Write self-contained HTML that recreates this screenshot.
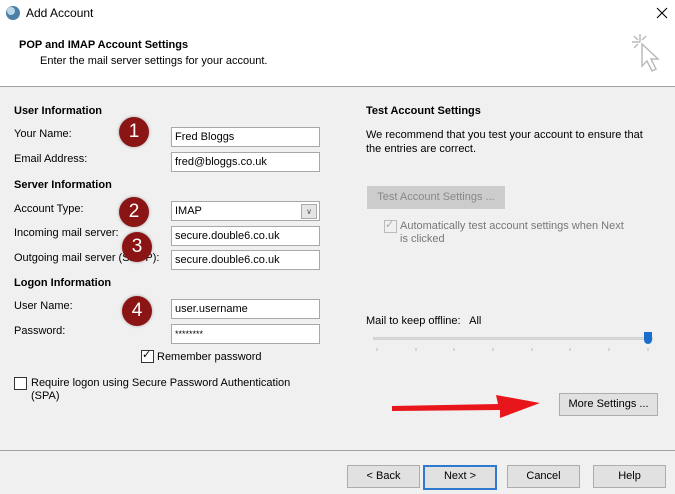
<!DOCTYPE html>
<html><head><style>
body{margin:0;width:675px;height:494px;background:#f0f0f0;font-family:"Liberation Sans",sans-serif;font-size:11px;color:#000;position:relative;overflow:hidden}
.a{position:absolute;white-space:nowrap}
.hdr{position:absolute;left:0;top:0;width:675px;height:86px;background:#fff;border-bottom:1px solid #a0a0a0}
.b{font-weight:bold}
.in{position:absolute;left:171px;width:144px;height:18px;border:1px solid #a8a8a8;background:#fff;line-height:18px;padding-left:3px;box-sizing:content-box;font-size:11px}
.c{position:absolute;width:30px;height:30px;border-radius:50%;background:#8b1414;color:#fff;font-size:19px;text-align:center;line-height:30px;box-shadow:0 0 3px rgba(0,0,0,.3)}
.btn{position:absolute;height:21px;border:1px solid #adadad;background:#e1e1e1;text-align:center;line-height:21px}
.cb{position:absolute;width:11px;height:11px;border:1px solid #333;background:#fff}
</style></head><body>
<div class="hdr"></div>
<svg class="a" style="left:5px;top:5px" width="16" height="16"><circle cx="8" cy="8" r="7" fill="#4a7fa8"/><circle cx="6" cy="6" r="4" fill="#b8d8ea"/></svg>
<div class="a" style="left:26px;top:6px;font-size:12px">Add Account</div>
<svg class="a" style="left:656px;top:7px" width="12" height="12" stroke="#000" stroke-width="1.1"><path d="M1 1L11 11M11 1L1 11"/></svg>
<svg class="a" style="left:628px;top:30px" width="36" height="52" stroke="#bbb" fill="none" stroke-width="1.5"><path d="M12 4v8M4 12h8M6 6l4 4M18 6l-4 4M6 18l4-4"/><path d="M14 14l0 22 5-5 5 10 4-2-5-10 7 0z" fill="#fff"/></svg>
<div class="a b" style="left:19px;top:39px">POP and IMAP Account Settings</div>
<div class="a" style="left:40px;top:55px">Enter the mail server settings for your account.</div>

<div class="a b" style="left:14px;top:105px">User Information</div>
<div class="a" style="left:14px;top:128px">Your Name:</div>
<div class="a" style="left:14px;top:153px">Email Address:</div>
<div class="a b" style="left:14px;top:179px">Server Information</div>
<div class="a" style="left:14px;top:203px">Account Type:</div>
<div class="a" style="left:14px;top:227px">Incoming mail server:</div>
<div class="a" style="left:14px;top:252px">Outgoing mail server (SMTP):</div>
<div class="a b" style="left:14px;top:277px">Logon Information</div>
<div class="a" style="left:14px;top:300px">User Name:</div>
<div class="a" style="left:14px;top:325px">Password:</div>

<div class="in" style="top:127px">Fred Bloggs</div>
<div class="in" style="top:152px">fred@bloggs.co.uk</div>
<div class="in" style="top:201px">IMAP<div style="position:absolute;right:2px;top:2px;width:14px;height:13px;border:1px solid #aaa;background:#e5e5e5;font-size:8px;line-height:13px;text-align:center;color:#555">∨</div></div>
<div class="in" style="top:226px">secure.double6.co.uk</div>
<div class="in" style="top:250px">secure.double6.co.uk</div>
<div class="in" style="top:299px">user.username</div>
<div class="in" style="top:324px;font-size:9px">********</div>

<div class="c" style="left:119px;top:117px">1</div>
<div class="c" style="left:119px;top:197px">2</div>
<div class="c" style="left:122px;top:232px">3</div>
<div class="c" style="left:122px;top:296px">4</div>

<div class="cb" style="left:141px;top:350px"></div><div class="a" style="left:142px;top:348px;font-size:11px">✓</div>
<div class="a" style="left:157px;top:351px">Remember password</div>
<div class="cb" style="left:14px;top:377px"></div>
<div class="a" style="left:31px;top:377px;line-height:13px">Require logon using Secure Password Authentication<br>(SPA)</div>

<div class="a b" style="left:366px;top:105px">Test Account Settings</div>
<div class="a" style="left:366px;top:128px;line-height:14px">We recommend that you test your account to ensure that<br>the entries are correct.</div>
<div class="btn" style="left:367px;top:186px;width:136px;color:#888;background:#ccc;border-color:#ccc">Test Account Settings ...</div>
<div class="cb" style="left:384px;top:220px;border-color:#bbb;background:#f0f0f0"></div><div class="a" style="left:385px;top:218px;color:#aaa">✓</div>
<div class="a" style="left:400px;top:220px;line-height:13px;color:#777">Automatically test account settings when Next<br>is clicked</div>
<div class="a" style="left:366px;top:315px">Mail to keep offline:&nbsp;&nbsp; All</div>
<div class="a" style="left:373px;top:337px;width:278px;height:1px;background:#ddd;border:1px solid #d0d0d0"></div>
<div class="a" style="left:644px;top:332px;width:8px;height:12px;background:#1a6fce;border-radius:0 0 4px 4px"></div>
<svg class="a" style="left:375px;top:348px" width="280" height="6" stroke="#bbb"><path d="M2 0v3M41 0v3M79 0v3M118 0v3M157 0v3M195 0v3M234 0v3M273 0v3"/></svg>
<div class="btn" style="left:559px;top:393px;width:97px">More Settings ...</div>
<svg class="a" style="left:390px;top:390px" width="155" height="35"><path d="M2 16 L108 14 L106 5 L150 13 L110 28 L110 20 L2 21z" fill="#e8161a"/></svg>

<div class="a" style="left:0;top:450px;width:675px;height:1px;background:#a0a0a0"></div>
<div class="btn" style="left:347px;top:465px;width:71px">&lt; Back</div>
<div class="btn" style="left:423px;top:465px;width:70px;border:2px solid #2f7ad0;line-height:19px">Next &gt;</div>
<div class="btn" style="left:507px;top:465px;width:71px">Cancel</div>
<div class="btn" style="left:593px;top:465px;width:71px">Help</div>
</body></html>
